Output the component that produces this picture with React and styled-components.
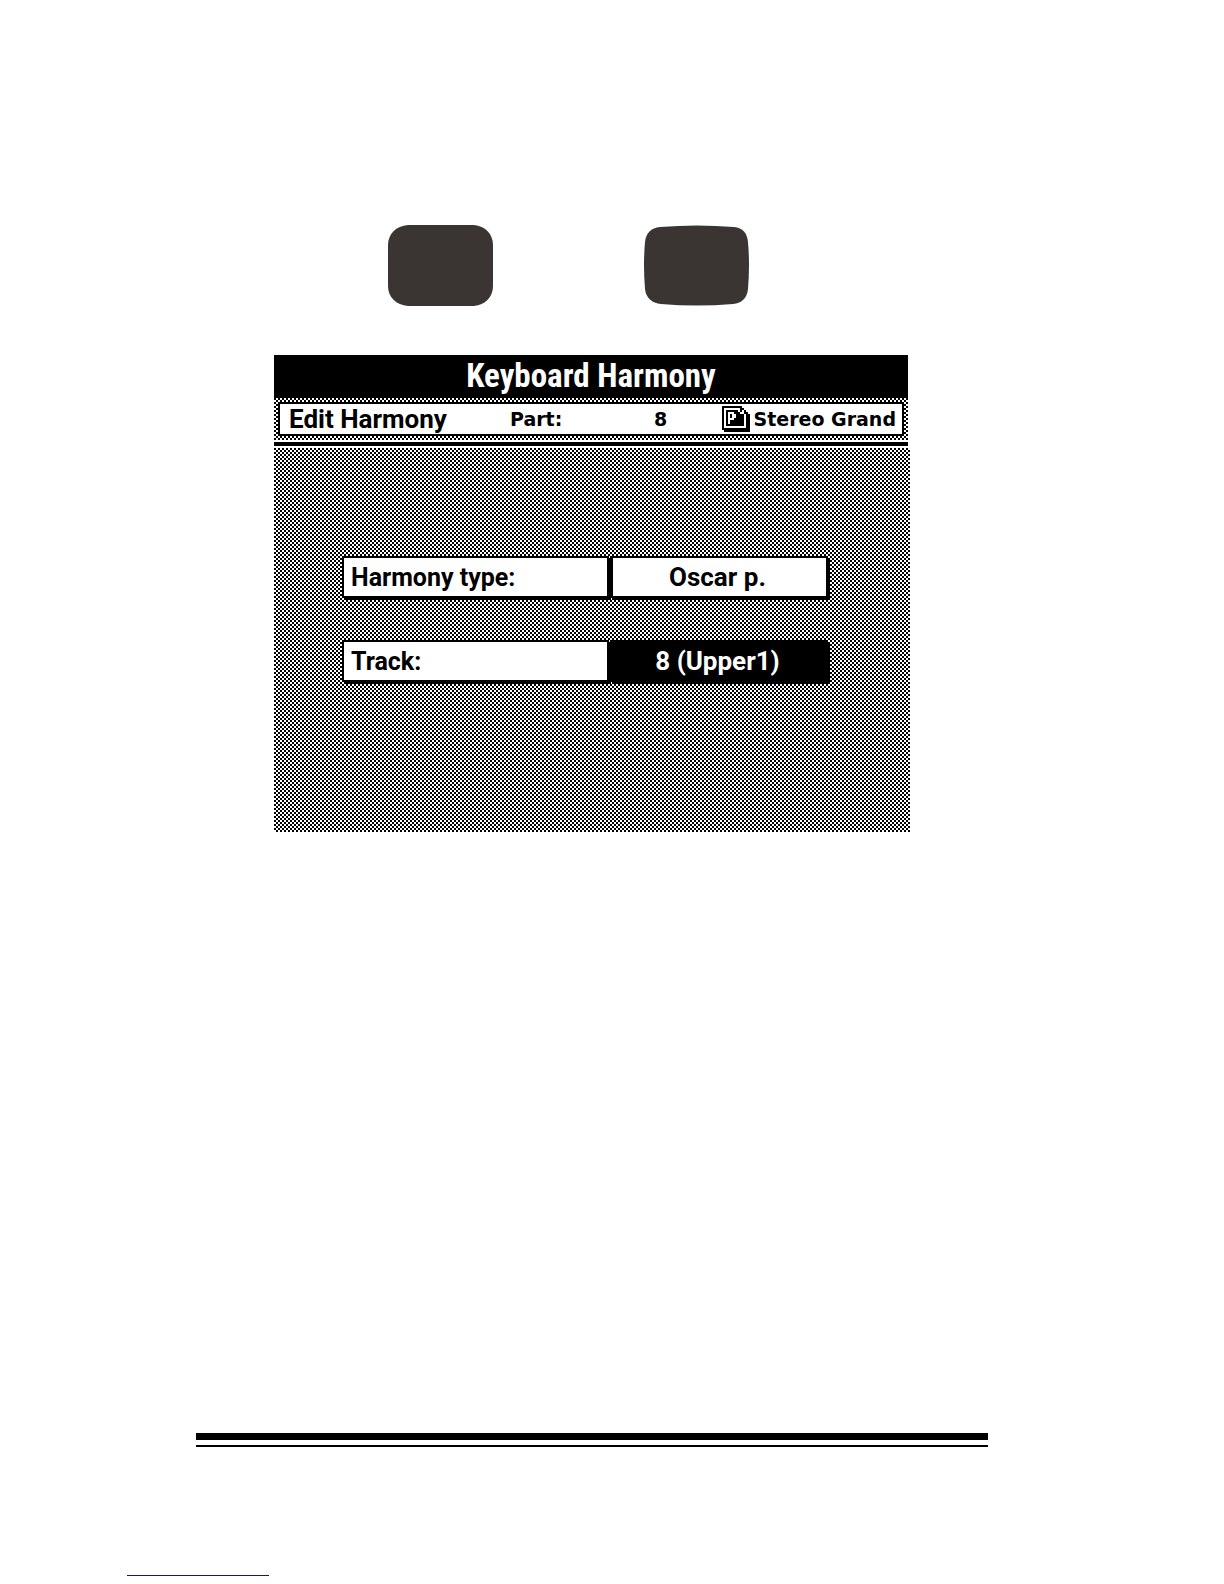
import React from "react";
import styled, { createGlobalStyle, css } from "styled-components";

const GlobalStyle = createGlobalStyle`
  *, *::before, *::after { box-sizing: border-box; }
  body { margin: 0; background: #fff; color: #000; }
`;

const sans = `Roboto, "Liberation Sans", sans-serif`;
const narrow = `"Liberation Sans Narrow", "Roboto Condensed", Roboto, sans-serif`;
const wide = `"DejaVu Sans", "Liberation Sans", sans-serif`;

const dither = css`
  background-color: #fff;
  background-image: conic-gradient(#fff 25%, #000 0 50%, #fff 0 75%, #000 0);
  background-size: 4px 4px;
`;

const Page = styled.main`
  display: flex;
  flex-direction: column;
  min-height: 100vh;
  padding: 225px 236px 8px 196px;
`;

const Keys = styled.div`
  display: flex;
  gap: 150px;
  padding-left: 192px;
  margin-bottom: 49px;
`;

const Key = styled.button`
  display: block;
  width: 106px;
  height: 81px;
  padding: 0;
  border: 0;
  background: none;
  cursor: pointer;

  svg { display: block; width: 100%; height: 100%; }
`;

const Screen = styled.section`
  width: 100%;
  max-width: 636px;
  margin: 0 auto;
`;

const Header = styled.header`
  margin-right: 2px;
`;

const Title = styled.h1`
  margin: 0;
  height: 43px;
  background: #000;
  color: #fff;
  font: 700 33px/42px ${narrow};
  text-align: center;
`;

const StatusFrame = styled.div`
  ${dither}
  padding: 4px;
`;

const StatusBar = styled.div`
  display: grid;
  grid-template-columns: 221px 144px 1fr auto;
  align-items: center;
  height: 34px;
  padding: 0 6px 0 9px;
  border: 2px solid #000;
  background: #fff;
  font: 700 19px/30px ${wide};
`;

const Mode = styled.h2`
  margin: 0;
  font: 700 26px/30px ${sans};
`;

const Sound = styled.span`
  display: flex;
  align-items: center;
  gap: 4px;
`;

const Divider = styled.div`
  height: 8px;
  border: solid #fff;
  border-width: 2px 0;
  background: #000;
`;

const Body = styled.form`
  ${dither}
  display: flex;
  flex-direction: column;
  gap: 42px;
  padding: 108px 82px 150px 68px;
`;

const Row = styled.div`
  display: grid;
  grid-template-columns: 267fr 217fr;
  gap: 2px;
`;

const cell = css`
  width: 100%;
  min-width: 0;
  height: 42px;
  border: 2px solid #000;
  border-radius: 0;
  box-shadow: 2px 2px 0 #000;
`;

const Label = styled.label`
  ${cell}
  padding-left: 7px;
  background: #fff;
  font: 700 25px/40px ${sans};
`;

const Value = styled.input`
  ${cell}
  padding: 0 4px 0 0;
  outline: 0;
  text-align: center;
  font: 700 26px/38px ${sans};
  background: ${(p) => (p.$active ? "#000" : "#fff")};
  color: ${(p) => (p.$active ? "#fff" : "#000")};
`;

const Footer = styled.footer`
  margin-top: auto;
`;

const Rule = styled.div`
  height: 14px;
  border: solid #000;
  border-width: 7px 0 2px;
`;

const FootLink = styled.a`
  display: block;
  width: 142px;
  height: 129px;
  margin-left: -69px;
  border-bottom: 1px solid #14148c;
`;

function ProgramIcon() {
  return (
    <svg width="28" height="26" viewBox="0 0 14 13" shapeRendering="crispEdges" aria-hidden="true">
      <path d="M0 0H10V1H11V2H12V3H13V4H14V13H1V12H0Z" />
      <path fill="#fff" d="M1 1H8V2H1Z M1 2H2V11H1Z M2 10H12V11H2Z M11 4H12V10H11Z M8 1H9V3H8Z M9 3H11V4H9Z M10 2H11V3H10Z" />
      <path fill="#fff" d="M3 3H6V4H7V6H6V7H4V9H3Z" />
      <path d="M4 4H5V6H4Z" />
    </svg>
  );
}

const keyShapes = [
  { name: "Shift", d: "M20 0H86C97 1 105 9 105 20V61C105 72 97 80 86 81H20C8 80 0 72 0 61V20C0 9 8 1 20 0Z" },
  {
    name: "Harmony",
    d: "M16 2Q53 -1 90 2C99 3 103 8 104 17Q106 40 104 64C103 73 98 78 89 79Q53 82 17 79C8 78 2 73 1 64Q-1 40 1 17C2 8 7 3 16 2Z",
  },
];

const fields = [
  { id: "type", label: "Harmony type:", value: "Oscar p." },
  { id: "track", label: "Track:", value: "8 (Upper1)", active: true },
];

export default function App() {
  return (
    <>
      <GlobalStyle />
      <Page>
        <Keys>
          {keyShapes.map((key) => (
            <Key key={key.name} type="button" aria-label={key.name}>
              <svg viewBox="0 0 106 81" aria-hidden="true">
                <path fill="#3a3532" d={key.d} />
              </svg>
            </Key>
          ))}
        </Keys>
        <Screen>
          <Header>
            <Title>Keyboard Harmony</Title>
            <StatusFrame>
              <StatusBar>
                <Mode>Edit Harmony</Mode>
                <span>Part:</span>
                <span>8</span>
                <Sound>
                  <ProgramIcon />
                  Stereo Grand
                </Sound>
              </StatusBar>
            </StatusFrame>
            <Divider />
          </Header>
          <Body>
            {fields.map((f) => (
              <Row key={f.id}>
                <Label htmlFor={f.id}>{f.label}</Label>
                <Value id={f.id} defaultValue={f.value} $active={f.active} />
              </Row>
            ))}
          </Body>
        </Screen>
        <Footer>
          <Rule />
          <FootLink href="#home" aria-label="Home" />
        </Footer>
      </Page>
    </>
  );
}
